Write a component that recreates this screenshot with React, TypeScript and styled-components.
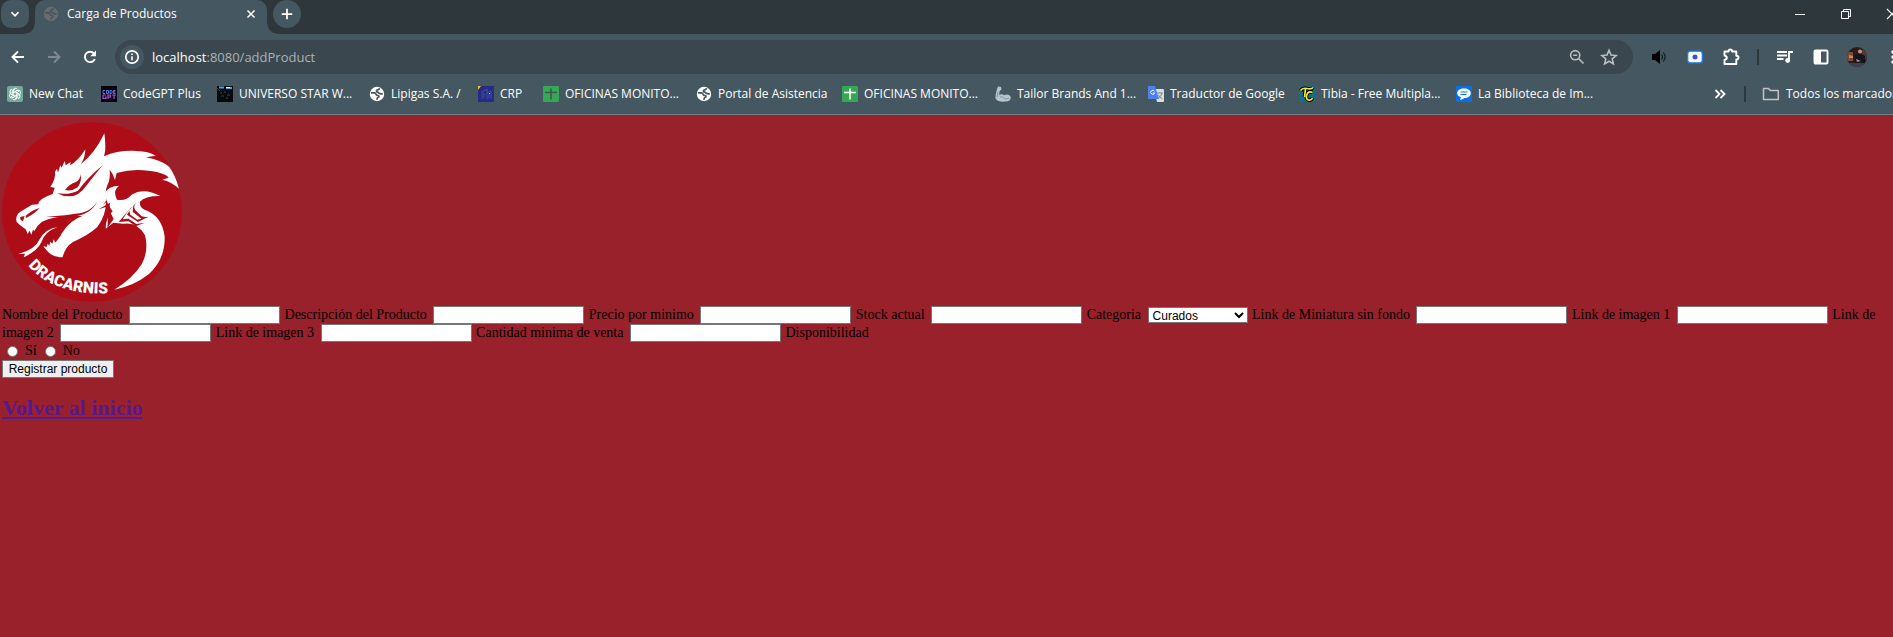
import React from "react";
import styled, { createGlobalStyle } from "styled-components";

const GlobalStyle = createGlobalStyle`
  *, *::before, *::after { box-sizing: border-box; }
  html { background: #99212b; }
  body { margin: 0; }
`;

const uiFont = `"Open Sans", "Noto Sans", sans-serif`;

/* ---------- browser frame ---------- */

const Chrome = styled.header`
  overflow: hidden;
  background: #455760;
  border-bottom: 1px solid #6f8089;
  padding-bottom: 6px;
  font-family: ${uiFont};
  font-size: 12px;
  line-height: 16px;
  color: #fff;
`;

const ChromeRow = styled.div`
  display: flex;
  align-items: center;
  width: calc(100% + 18px);
`;

const TabStrip = styled(ChromeRow)`
  height: 34px;
  align-items: flex-start;
  background: #2d373c;
`;

const IconButton = styled.button<{ $width?: number }>`
  display: flex;
  flex: none;
  align-items: center;
  justify-content: center;
  width: ${(p) => p.$width ?? 36}px;
  height: 28px;
  padding: 0;
  border: 0;
  background: none;
  color: #fff;
  svg { display: block; flex: none; }
`;

const TabSearch = styled(IconButton)`
  margin: 0 6px 0 1px;
  border-radius: 10px;
  background: #455760;
`;

const NewTab = styled(IconButton)`
  margin-left: 6px;
  border-radius: 50%;
  background: #455760;
`;

const Tab = styled.div`
  position: relative;
  display: flex;
  align-items: center;
  gap: 8px;
  flex: none;
  width: 232px;
  height: 34px;
  padding: 0 8px 6px;
  border-radius: 10px 10px 0 0;
  background: #455760;
  &::before, &::after {
    content: "";
    position: absolute;
    bottom: 0;
    width: 10px;
    height: 10px;
  }
  &::before {
    left: -10px;
    background: radial-gradient(circle at 0 0, transparent 9px, #455760 10px);
  }
  &::after {
    right: -10px;
    background: radial-gradient(circle at 100% 0, transparent 9px, #455760 10px);
  }
  svg { flex: none; }
`;

const TabTitle = styled.span`
  flex: 1;
  white-space: nowrap;
`;

const WindowControls = styled.div`
  display: flex;
  margin-left: auto;
  margin-right: -4px;
`;

const Toolbar = styled(ChromeRow)`
  height: 46px;
`;

const Omnibox = styled.div`
  display: flex;
  align-items: center;
  flex: 1;
  height: 34px;
  margin: 0 8px 0 7px;
  padding: 0 8px 0 5px;
  border-radius: 17px;
  background: #3a474e;
  font-size: 13px;
  line-height: 20px;
`;

const SiteInfo = styled(IconButton)`
  height: 24px;
  margin-right: 8px;
  border-radius: 50%;
  background: #455760;
`;

const Address = styled.span`
  flex: 1;
  color: #a9b3b8;
  b { font-weight: 400; color: #fff; }
`;

const MutedButton = styled(IconButton)`
  color: #b9bfc2;
`;

const Divider = styled.span`
  flex: none;
  width: 2px;
  height: 16px;
  margin: 0 8px;
  background: #2d373c;
`;

const BookmarkBar = styled.nav`
  display: flex;
  align-items: center;
  width: calc(100% + 18px);
  height: 28px;
  padding-left: 7px;
`;

const Bookmark = styled.a<{ $width: number }>`
  display: flex;
  flex: none;
  align-items: center;
  gap: 6px;
  width: ${(p) => p.$width}px;
  color: #fff;
  text-decoration: none;
  white-space: nowrap;
  svg { flex: none; }
`;

const BookmarkOverflow = styled.div`
  display: flex;
  align-items: center;
  gap: 8px;
  margin-left: auto;
`;

/* ---------- page ---------- */

const Page = styled.main`
  padding: 7px 2px;
  font-family: "Liberation Serif", serif;
  font-size: 14px;
  line-height: 18px;
  color: #000;
`;

const Logo = styled.svg`
  display: block;
  width: 180px;
  height: 180px;
  margin-bottom: 4px;
`;

const Form = styled.form`
  margin: 0;
`;

const FieldLabel = styled.label`
  margin-right: 3px;
`;

const TextField = styled.input`
  width: 151px;
  height: 18px;
  margin: 0 1px 0 0;
  padding: 1px 2px;
  border: 1px solid #767676;
  background: #fff;
  font: 12px "Liberation Sans", sans-serif;
  vertical-align: top;
`;

const SelectField = styled.select`
  width: 100px;
  height: 16px;
  margin: 1px 1px 1px 0;
  padding: 0;
  border: 1px solid #767676;
  border-radius: 0;
  background: #fff;
  color: #000;
  font: 12px "Liberation Sans", sans-serif;
  vertical-align: top;
`;

const Choices = styled.div`
  display: flex;
  align-items: center;
  height: 18px;
`;

const RadioField = styled.input`
  appearance: none;
  width: 11px;
  height: 11px;
  margin: 0 7px 0 5px;
  border: 1px solid #767676;
  border-radius: 50%;
  background: #fff;
  &:checked { box-shadow: inset 0 0 0 2px #fff; background: #0075ff; }
`;

const ChoiceLabel = styled.label`
  margin-right: 3px;
`;

const SubmitButton = styled.button`
  display: block;
  width: 112px;
  height: 18px;
  padding: 0;
  border: 1px solid #767676;
  background: #efefef;
  color: #000;
  font: 12px "Liberation Sans", sans-serif;
  white-space: nowrap;
`;

const BackHeading = styled.h2`
  margin: 18px 0;
  font-size: 22px;
  line-height: 24px;
  a { color: #551a8b; }
`;

/* ---------- icons ---------- */

type StrokeProps = { size?: number; d: string; width?: number; color?: string };
const Stroke = ({ size = 16, d, width = 2, color = "currentColor" }: StrokeProps) => (
  <svg width={size} height={size} viewBox="0 0 16 16" fill="none" stroke={color} strokeWidth={width}>
    <path d={d} />
  </svg>
);

const Globe = ({ color = "#fff", cut = "#455760" }: { color?: string; cut?: string }) => (
  <svg width="16" height="16" viewBox="0 0 16 16">
    <circle cx="8" cy="8" r="7.2" fill={color} />
    <path
      d="M2 6.800h3.200q1.600 0 1.800 1.400t2 1.300q1.200.2.800 1.500-1.800.3-1.800 2.800M10.500 2.200q-.2 1.600-2 1.700-1.600.4-.8 1.800 1.500.3 2.300 1.500 1 1 3.800.6"
      fill="none"
      stroke={cut}
      strokeWidth="1.700"
    />
  </svg>
);

const ChatIcon = () => (
  <svg width="16" height="16" viewBox="0 0 16 16">
    <rect width="16" height="16" rx="2" fill="#75a99c" />
    <g fill="none" stroke="#fff" strokeWidth="0.9">
      {[0, 60, 120, 180, 240, 300].map((a) => (
        <path key={a} transform={`rotate(${a} 8 8)`} d="M6 9.200V4.600a2.400 2.400 0 0 1 4.400-1.300M6 6.800l4-2.300 2 1.200" />
      ))}
    </g>
  </svg>
);

const CodeGptIcon = () => (
  <svg width="16" height="16" viewBox="0 0 16 16">
    <rect width="16" height="16" fill="#05030d" />
    <path d="M4 4.500H2v3h2M5.500 4.500h2v3h-2zM9 4.500h1.500l.8 1.500-.8 1.500H9zM14.500 4.500h-2v3h2M12.500 6h2" fill="none" stroke="#5c7bd6" />
    <path d="M5 9H2v3.500h3V11H4M7 13V9h2.500v2H7M11 9h4M13 9v4" fill="none" stroke="#a653dd" strokeWidth="1.200" />
  </svg>
);

const StarWarsIcon = () => (
  <svg width="16" height="16" viewBox="0 0 16 16">
    <rect width="16" height="16" fill="#07090c" />
    <path d="M2 1.500h5M9 2h6" stroke="#3ea7dc" strokeWidth="2" />
    <path d="M9 1.500h4" stroke="#f0e5dc" />
    <path d="M0 2l3 3M3 7h2M7 6h2M4 10h3M10 9h3M9 12h2" stroke="#2d4660" />
  </svg>
);

const CrpIcon = () => (
  <svg width="16" height="16" viewBox="0 0 16 16">
    <rect width="16" height="16" fill="#252c82" />
    <path d="M0 0h3L0 4z" fill="#f2c62b" />
    <path d="M4 13V6l5-3v10M9 7l4-2v8M6 7v5M11 8v4" fill="none" stroke="#4150a7" />
    <path d="M11 7h1v1h-1z" fill="#e0bf42" />
  </svg>
);

const SheetsIcon = ({ color = "#fff" }: { color?: string }) => (
  <svg width="16" height="16" viewBox="0 0 16 16">
    <rect width="16" height="16" rx="1" fill="#34a853" />
    <path d="M2 6.500h12M8 2.500v11" stroke={color} strokeWidth="1.600" />
  </svg>
);

const ArmIcon = () => (
  <svg width="16" height="16" viewBox="0 0 16 16">
    <path d="M3 0.500l3 .5.500 2.500L4.600 5 4.200 9c2-1.600 4-.7 5 .3 2.400-1.500 5.800-.8 6.500 1.700.5 2.200-1.700 4.400-5 4.600C6 16 2 15.500 0.600 12.600 0 10 1.400 4.500 3 .5z" fill="#b7c6ce" />
    <path d="M5 11c2-.6 3.200 0 4 1.300 1.500.8 3.500.6 5-.3M3 6L2 11" fill="none" stroke="#81949f" />
  </svg>
);

const TranslateIcon = () => (
  <svg width="16" height="16" viewBox="0 0 16 16">
    <path d="M6 3h9q1 0 1 1v11q0 1-1 1H9z" fill="#d9dde0" />
    <path d="M9 7h6M12 6v1M14 7q-1 4-4 5M10.500 9q1 2.500 4 4" fill="none" stroke="#737f87" strokeWidth="0.900" />
    <path d="M1 0h6l4 13H1q-1 0-1-1V1q0-1 1-1z" fill="#4b83ec" />
    <path d="M6.500 5.200A2 2 0 1 0 6.700 7H5" fill="none" stroke="#fff" strokeWidth="0.900" />
  </svg>
);

const TibiaIcon = () => (
  <svg width="16" height="16" viewBox="0 0 16 16">
    <rect width="16" height="16" fill="#126e91" />
    <path d="M1.500 4.500Q3.500 1.500 8 2.500T14 1.500M6.500 3L5.500 11M13.500 6.500Q9 4.500 7.800 9T9.500 14t4-2" fill="none" stroke="#000" strokeWidth="3.600" />
    <path d="M1.500 4.500Q3.500 1.500 8 2.500T14 1.500M6.500 3L5.500 11M13.500 6.500Q9 4.500 7.800 9T9.500 14t4-2" fill="none" stroke="#ffe52e" strokeWidth="1.700" />
  </svg>
);

const SpeechIcon = () => (
  <svg width="16" height="16" viewBox="0 0 16 16">
    <rect width="16" height="16" rx="1" fill="#0870e5" />
    <path d="M8 2.500c4 0 6.800 2 6.800 4.700S12 12 8.500 12c-2 1-3.500 2-4.500 2l1-2.800C2.500 10.500 1.200 9 1.200 7.200 1.200 4.500 4 2.500 8 2.500z" fill="#fff" />
    <path d="M4.500 6h7M4.500 8.500h6" stroke="#0870e5" />
  </svg>
);

const InfoIcon = () => (
  <svg width="16" height="16" viewBox="0 0 16 16" fill="none" stroke="#fff">
    <circle cx="8" cy="8" r="6.200" strokeWidth="1.700" />
    <path d="M8 7.200v4M8 4.500v1.500" strokeWidth="1.600" />
  </svg>
);

const ReloadIcon = () => (
  <svg width="16" height="16" viewBox="0 0 16 16">
    <path d="M12.800 10.200a5.200 5.200 0 1 1-.7-5.600" fill="none" stroke="#fff" strokeWidth="1.900" />
    <path d="M14 1.500v5.700H8.300z" fill="#fff" />
  </svg>
);

const ZoomOutIcon = () => (
  <svg width="16" height="16" viewBox="0 0 16 16" fill="none" stroke="currentColor" strokeWidth="1.600">
    <circle cx="6.200" cy="6.200" r="4.600" />
    <path d="M4.200 6.200h4M9.500 9.500l5 5" />
  </svg>
);

const StarIcon = () => (
  <svg width="18" height="18" viewBox="0 0 18 18">
    <path d="M9 2.300l2 4.700 5.100.5-3.900 3.400 1.200 5L9 13.200l-4.400 2.700 1.200-5L1.900 7.500 7 7z" fill="none" stroke="currentColor" strokeWidth="1.600" />
  </svg>
);

const SpeakerIcon = () => (
  <svg width="16" height="16" viewBox="0 0 16 16">
    <path d="M1 5h3l5-4v14l-5-4H1z" fill="#000" />
    <path d="M10.500 5.500q2 2.500 0 5M12.300 3.500q3.600 4.500 0 9" fill="none" stroke="#151b1e" strokeWidth="1.200" />
  </svg>
);

const CameraIcon = () => (
  <svg width="16" height="16" viewBox="0 0 16 16">
    <rect x="0.700" y="2.200" width="14.600" height="11.600" rx="2.500" fill="#fff" stroke="#1a7cf4" strokeWidth="1.300" />
    <circle cx="8" cy="8" r="2.500" fill="#3f51d6" />
  </svg>
);

const PuzzleIcon = () => (
  <svg width="18" height="18" viewBox="0 0 18 18">
    <path d="M2.500 3.500h4q0-2 1.800-2t1.800 2h4.200v4.200q2.200 0 2.200 1.900t-2.200 1.900v4.500H2.500v-4q2.300-.4 2.300-2.200T2.500 7.500z" fill="none" stroke="#fff" strokeWidth="1.900" strokeLinejoin="round" />
  </svg>
);

const QueueIcon = () => (
  <svg width="16" height="16" viewBox="0 0 16 16">
    <path d="M0 3h10M0 6.500h10M0 10h6.500M12 10.800V3h4" fill="none" stroke="#fff" strokeWidth="1.900" />
    <circle cx="10.700" cy="11.500" r="2.400" fill="#fff" />
  </svg>
);

const PanelIcon = () => (
  <svg width="16" height="16" viewBox="0 0 16 16">
    <rect x="1.500" y="1.500" width="13" height="13" rx="1" fill="none" stroke="#fff" strokeWidth="1.900" />
    <path d="M1.500 1.500H8v13H1.500z" fill="#fff" />
  </svg>
);

const Avatar = () => (
  <svg width="20" height="20" viewBox="0 0 20 20">
    <defs>
      <clipPath id="avatar-clip"><circle cx="10" cy="10" r="10" /></clipPath>
    </defs>
    <g clipPath="url(#avatar-clip)">
      <path d="M0 0h20v20H0z" fill="#2a1c1a" />
      <path d="M0 5h6v9H0z" fill="#7c4a36" />
      <path d="M14 3h6v9h-5z" fill="#513a35" />
      <circle cx="13" cy="4.500" r="2" fill="#c39480" />
      <path d="M8 8q5-3 10 1v7H8z" fill="#12151b" />
      <path d="M2 8l4 1v2H2zM9 12l5 2-4 1z" fill="#b78a76" />
      <path d="M3 16h14v4H3z" fill="#3d414a" />
    </g>
  </svg>
);

const DotsIcon = () => (
  <svg width="4" height="16" viewBox="0 0 4 16" fill="#fff">
    <circle cx="2" cy="3" r="1.700" />
    <circle cx="2" cy="8" r="1.700" />
    <circle cx="2" cy="13" r="1.700" />
  </svg>
);

const FolderIcon = () => (
  <svg width="18" height="16" viewBox="0 0 18 16">
    <path d="M1.500 2.500h5l1.800 2h8v9H1.500z" fill="none" stroke="#c2c2c7" strokeWidth="1.500" strokeLinejoin="round" />
  </svg>
);

const DragonLogo = () => (
  <Logo viewBox="6 21 540 540" role="img" aria-label="Dracarnis">
    <defs>
      <path id="logo-arc" d="M84 452Q166 546 345 534" />
    </defs>
    <circle cx="276" cy="291" r="270" fill="#ae0d17" />
    <g fill="#fff">
      {/* head, horns and upper jaw */}
      <path d="M313 55Q316 77 316 94Q317 109 312 124Q355 105 410 108Q446 109 467 122L438 127Q486 136 508 156Q526 181 537 221Q514 200 487 194L506 188Q493 171 430 166Q390 163 350 174L345 195Q340 176 329 164Q332 192 322 211Q314 230 319 256Q304 281 278 293Q235 316 211 344Q192 361 188 398Q188 383 165 384Q181 375 184 357Q210 314 248 303Q174 298 126 320Q112 330 103 348L99 344L94 359L89 347L83 357L77 343Q59 331 50 321Q44 302 61 290L96 269L115 268Q116 251 158 237L164 218L151 216Q168 190 165 170L171 161L174 173L181 151L185 158L194 138L197 151L212 141L210 151Q233 140 256 103Q256 126 243 147Q285 115 313 55z" />
      {/* lower jaw */}
      <path d="M318 262Q317 304 292 336Q266 360 219 381Q196 395 188 426Q154 431 130 393L140 396L143 386L148 392L151 380L157 386L161 373L166 383Q184 360 199 340Q225 307 280 291z" />
      {/* neck and tail */}
      <path d="M312 239Q321 214 357 212Q337 228 351 254Q377 260 395 239Q432 217 481 243Q435 242 420 260Q417 276 434 284Q487 303 494 365Q496 432 446 478Q400 514 343 524Q398 491 425 448Q447 406 435 361Q414 320 370 326L340 323L317 341Q317 306 338 289Q321 266 319 253z" />
      {/* tongue */}
      <path d="M173 336Q136 341 119 373Q106 404 55 417L75 416L71 427Q112 408 124 382Q133 350 173 336z" />
    </g>
    <g fill="#ae0d17">
      {/* brow and eye */}
      <path d="M308 151Q286 177 260 211Q236 246 206 244Q187 244 172 235Q209 240 234 227Q264 187 308 151z" />
      <path d="M195 225Q208 207 228 201Q240 195 242 178Q246 201 233 217Q215 230 195 225z" />
      {/* mouth line, cheek and nostril */}
      <path d="M291 261Q272 300 214 306H136Q200 301 244 294Q274 287 291 261z" />
      <path d="M296 283L330 263L328 286L341 312L322 339Q326 308 318 285L320 275z" />
      <path d="M60 306L74 303L69 319L62 315zM78 309Q103 297 119 279Q101 283 77 302z" />
      {/* neck scales */}
      <path d="M413 259Q397 272 406 286L425 304L445 308L424 311L398 290L400 272zM397 273Q384 284 391 299L412 314L443 306L414 321L381 299zM387 284L368 313L386 311L409 327L434 323L407 334L386 319L356 321z" />
    </g>
    <text fill="#fff" fontFamily="Roboto, sans-serif" fontSize="47" fontWeight="900">
      <textPath href="#logo-arc">DRACARNIS</textPath>
    </text>
  </Logo>
);

/* ---------- data ---------- */

const bookmarks: { title: string; width: number; icon: React.ReactNode }[] = [
  { title: "New Chat", width: 94, icon: <ChatIcon /> },
  { title: "CodeGPT Plus", width: 116, icon: <CodeGptIcon /> },
  { title: "UNIVERSO STAR W...", width: 152, icon: <StarWarsIcon /> },
  { title: "Lipigas S.A. /", width: 109, icon: <Globe /> },
  { title: "CRP", width: 65, icon: <CrpIcon /> },
  { title: "OFICINAS MONITO...", width: 153, icon: <SheetsIcon color="#46544f" /> },
  { title: "Portal de Asistencia", width: 146, icon: <Globe /> },
  { title: "OFICINAS MONITO...", width: 153, icon: <SheetsIcon /> },
  { title: "Tailor Brands And 1...", width: 153, icon: <ArmIcon /> },
  { title: "Traductor de Google", width: 151, icon: <TranslateIcon /> },
  { title: "Tibia - Free Multipla...", width: 157, icon: <TibiaIcon /> },
  { title: "La Biblioteca de Im...", width: 140, icon: <SpeechIcon /> },
];

const Field = ({ id, label }: { id: string; label: string }) => (
  <>
    <FieldLabel htmlFor={id}>{label}</FieldLabel> <TextField id={id} name={id} type="text" />{" "}
  </>
);

export default function App() {
  return (
    <>
      <GlobalStyle />
      <Chrome>
        <TabStrip>
          <TabSearch $width={28} aria-label="Buscar pestañas"><Stroke size={14} d="M4 6l4 4 4-4" /></TabSearch>
          <Tab>
            <Globe color="#686b6f" />
            <TabTitle>Carga de Productos</TabTitle>
            <IconButton $width={16} aria-label="Cerrar pestaña"><Stroke size={14} d="M4 4l8 8M12 4l-8 8" width={1.8} /></IconButton>
          </Tab>
          <NewTab $width={28} aria-label="Nueva pestaña"><Stroke size={14} d="M8 2v12M2 8h12" /></NewTab>
          <WindowControls>
            <IconButton $width={46} aria-label="Minimizar"><Stroke d="M3 8.500h10" width={1} /></IconButton>
            <IconButton $width={46} aria-label="Restaurar"><Stroke d="M3.500 5.500h7v7h-7zM5.500 5V3.500h7v7H11" width={1} /></IconButton>
            <IconButton $width={46} aria-label="Cerrar"><Stroke d="M3 3l10 10M13 3L3 13" width={1.2} /></IconButton>
          </WindowControls>
        </TabStrip>
        <Toolbar>
          <IconButton aria-label="Atrás"><Stroke d="M14 8H3M8 2.500L2.500 8 8 13.500" width={1.9} /></IconButton>
          <IconButton aria-label="Adelante"><Stroke d="M2 8h11M8 2.500L13.500 8 8 13.500" width={1.9} color="#7f8b91" /></IconButton>
          <IconButton aria-label="Recargar"><ReloadIcon /></IconButton>
          <Omnibox>
            <SiteInfo $width={24} aria-label="Información del sitio"><InfoIcon /></SiteInfo>
            <Address><b>localhost</b>:8080/addProduct</Address>
            <MutedButton $width={32} aria-label="Zoom"><ZoomOutIcon /></MutedButton>
            <MutedButton $width={32} aria-label="Agregar a marcadores"><StarIcon /></MutedButton>
          </Omnibox>
          <IconButton aria-label="Volumen"><SpeakerIcon /></IconButton>
          <IconButton aria-label="Captura"><CameraIcon /></IconButton>
          <IconButton aria-label="Extensiones"><PuzzleIcon /></IconButton>
          <Divider />
          <IconButton aria-label="Multimedia"><QueueIcon /></IconButton>
          <IconButton aria-label="Panel lateral"><PanelIcon /></IconButton>
          <IconButton aria-label="Perfil"><Avatar /></IconButton>
          <IconButton aria-label="Menú"><DotsIcon /></IconButton>
        </Toolbar>
        <BookmarkBar>
          {bookmarks.map((b, i) => (
            <Bookmark key={i} href="#" $width={b.width}>{b.icon}{b.title}</Bookmark>
          ))}
          <BookmarkOverflow>
            <IconButton $width={16} aria-label="Más marcadores"><Stroke d="M3.500 4L7.500 8l-4 4M8.500 4l4 4-4 4" width={1.8} /></IconButton>
            <Divider />
            <Bookmark href="#" $width={149}><FolderIcon />Todos los marcadores</Bookmark>
          </BookmarkOverflow>
        </BookmarkBar>
      </Chrome>
      <Page>
        <DragonLogo />
        <Form onSubmit={(e) => e.preventDefault()}>
          <Field id="nombre" label="Nombre del Producto" />
          <Field id="descripcion" label="Descripción del Producto" />
          <Field id="precio" label="Precio por minimo" />
          <Field id="stock" label="Stock actual" />
          <FieldLabel htmlFor="categoria">Categoria</FieldLabel>{" "}
          <SelectField id="categoria" name="categoria" defaultValue="Curados">
            <option>Curados</option>
          </SelectField>{" "}
          <Field id="miniatura" label="Link de Miniatura sin fondo" />
          <Field id="imagen1" label="Link de imagen 1" />
          <Field id="imagen2" label="Link de imagen 2" />
          <Field id="imagen3" label="Link de imagen 3" />
          <Field id="cantidad" label="Cantidad minima de venta" />
          <span id="disponibilidad">Disponibilidad</span>
          <Choices role="radiogroup" aria-labelledby="disponibilidad">
            <RadioField type="radio" id="si" name="disponible" />
            <ChoiceLabel htmlFor="si">Sí</ChoiceLabel>
            <RadioField type="radio" id="no" name="disponible" />
            <ChoiceLabel htmlFor="no">No</ChoiceLabel>
          </Choices>
          <SubmitButton type="submit">Registrar producto</SubmitButton>
        </Form>
        <BackHeading><a href="#">Volver al inicio</a></BackHeading>
      </Page>
    </>
  );
}
